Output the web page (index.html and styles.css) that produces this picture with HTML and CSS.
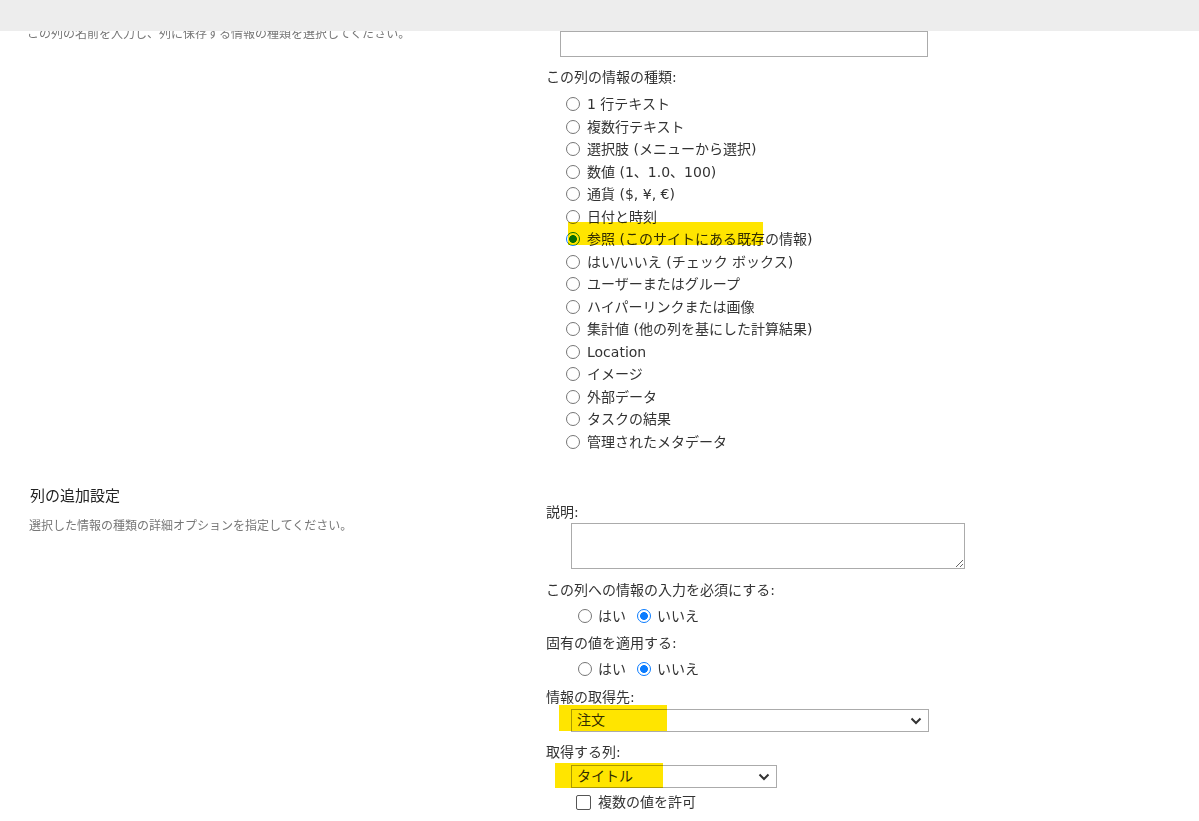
FILE: index.html
```html
<!DOCTYPE html>
<html lang="ja">
<head>
<meta charset="utf-8">
<title>列の作成</title>
<link rel="stylesheet" href="styles.css">
</head>
<body>
<div class="topbar"></div>
<main class="page">
  <section class="sec sec-name">
    <div class="left">
      <p class="desc">この列の名前を入力し、列に保存する情報の種類を選択してください。</p>
    </div>
    <div class="right">
      <input class="text-input" type="text">
      <div class="label lbl-type">この列の情報の種類:</div>
      <ul class="type-list">
        <li><label class="opt"><input type="radio" name="t"><span>1 行テキスト</span></label></li>
        <li><label class="opt"><input type="radio" name="t"><span>複数行テキスト</span></label></li>
        <li><label class="opt"><input type="radio" name="t"><span>選択肢 (メニューから選択)</span></label></li>
        <li><label class="opt"><input type="radio" name="t"><span>数値 (1、1.0、100)</span></label></li>
        <li><label class="opt"><input type="radio" name="t"><span>通貨 ($, ¥, €)</span></label></li>
        <li><label class="opt"><input type="radio" name="t"><span>日付と時刻</span></label></li>
        <li><label class="opt"><input type="radio" name="t" checked><span>参照 (このサイトにある既存の情報)</span></label><span class="hl hl-lookup"></span></li>
        <li><label class="opt"><input type="radio" name="t"><span>はい/いいえ (チェック ボックス)</span></label></li>
        <li><label class="opt"><input type="radio" name="t"><span>ユーザーまたはグループ</span></label></li>
        <li><label class="opt"><input type="radio" name="t"><span>ハイパーリンクまたは画像</span></label></li>
        <li><label class="opt"><input type="radio" name="t"><span>集計値 (他の列を基にした計算結果)</span></label></li>
        <li><label class="opt"><input type="radio" name="t"><span>Location</span></label></li>
        <li><label class="opt"><input type="radio" name="t"><span>イメージ</span></label></li>
        <li><label class="opt"><input type="radio" name="t"><span>外部データ</span></label></li>
        <li><label class="opt"><input type="radio" name="t"><span>タスクの結果</span></label></li>
        <li><label class="opt"><input type="radio" name="t"><span>管理されたメタデータ</span></label></li>
      </ul>
    </div>
  </section>

  <section class="sec sec-extra">
    <div class="left">
      <h3 class="title">列の追加設定</h3>
      <p class="desc">選択した情報の種類の詳細オプションを指定してください。</p>
    </div>
    <div class="right">
      <div class="label">説明:</div>
      <textarea class="textarea"></textarea>
      <div class="label lbl-req">この列への情報の入力を必須にする:</div>
      <div class="radio-row">
        <label class="opt"><input type="radio" name="req"><span>はい</span></label>
        <label class="opt second"><input type="radio" name="req" checked><span>いいえ</span></label>
      </div>
      <div class="label lbl-uniq">固有の値を適用する:</div>
      <div class="radio-row">
        <label class="opt"><input type="radio" name="uniq"><span>はい</span></label>
        <label class="opt second"><input type="radio" name="uniq" checked><span>いいえ</span></label>
      </div>
      <div class="label lbl-src">情報の取得先:</div>
      <div class="fake-select sel-src">
        <span>注文</span>
        <svg class="chev" width="12" height="8" viewBox="0 0 12 8"><polyline points="1.5,1.5 6,6 10.5,1.5" fill="none" stroke="#333" stroke-width="2"/></svg>
        <span class="hl hl-src"></span>
      </div>
      <div class="label lbl-col">取得する列:</div>
      <div class="fake-select sel-col">
        <span>タイトル</span>
        <svg class="chev" width="12" height="8" viewBox="0 0 12 8"><polyline points="1.5,1.5 6,6 10.5,1.5" fill="none" stroke="#333" stroke-width="2"/></svg>
        <span class="hl hl-col"></span>
      </div>
      <label class="opt check-row"><input type="checkbox"><span>複数の値を許可</span></label>
    </div>
  </section>
</main>
</body>
</html>
```

FILE: styles.css
```css
html, body {
  margin: 0;
  padding: 0;
  background: #ffffff;
}

body {
  font-family: "DejaVu Sans", "Noto Sans CJK JP", sans-serif;
  color: #333333;
  font-size: 14px;
}

.topbar {
  position: fixed;
  top: 0;
  left: 0;
  right: 0;
  height: 31px;
  background: #ededed;
  z-index: 10;
}

.page {
  display: block;
}

.sec {
  display: grid;
  grid-template-columns: 546px 1fr;
}

.left {
  padding-left: 27px;
}

.desc {
  margin: 0;
  font-family: "Noto Sans CJK JP", sans-serif;
  font-size: 12px;
  line-height: 18px;
  color: #777777;
}

.sec-name .desc {
  margin-top: 24px;
}

.sec-name .right {
  padding-top: 31px;
}

.text-input {
  display: block;
  box-sizing: border-box;
  margin: 0 0 0 14px;
  width: 368px;
  height: 26px;
  border: 1px solid #ababab;
  background: #fff;
  padding: 0 4px;
  font: inherit;
}

.label {
  font-size: 14px;
  line-height: 22px;
  white-space: nowrap;
}

.lbl-type {
  margin-top: 9px;
}

.type-list {
  list-style: none;
  margin: 5px 0 0;
  padding: 0 0 0 20px;
}

.type-list li {
  position: relative;
  height: 22.5px;
}

.opt {
  display: flex;
  align-items: center;
  height: 100%;
  line-height: 22px;
  white-space: nowrap;
}

.opt input[type="radio"] {
  appearance: none;
  -webkit-appearance: none;
  box-sizing: border-box;
  width: 14px;
  height: 14px;
  margin: 0 7px 0 0;
  flex: none;
  border: 1.5px solid #767676;
  border-radius: 50%;
  background: #fff;
}

.opt input[type="radio"]:checked {
  border: 1.5px solid #0a7cff;
  background: radial-gradient(circle, #0a7cff 0 3.6px, #fff 4.2px);
}

.hl {
  position: absolute;
  background: #ffe500;
  mix-blend-mode: multiply;
  pointer-events: none;
}

.hl-lookup {
  left: 2px;
  top: -6px;
  width: 195px;
  height: 23px;
}

/* section 2 */
.sec-extra .left {
  padding-left: 29px;
  padding-top: 32px;
}

.title {
  margin: 0 0 0 1px;
  font-family: "Noto Sans CJK JP", sans-serif;
  font-weight: normal;
  font-size: 15px;
  line-height: 20px;
  color: #222222;
}

.sec-extra .desc {
  margin-top: 11px;
}

.sec-extra .right {
  padding-top: 48px;
}

.textarea {
  display: block;
  box-sizing: border-box;
  margin: 0 0 0 25px;
  width: 394px;
  height: 46px;
  border: 1px solid #ababab;
  resize: both;
  font: inherit;
}

.lbl-req {
  margin-top: 10px;
}

.radio-row {
  display: flex;
  align-items: center;
  height: 22px;
  margin-top: 4px;
  padding-left: 32px;
}

.radio-row .opt input[type="radio"] {
  margin-right: 6px;
}

.radio-row .second {
  margin-left: 11px;
}

.lbl-uniq {
  margin-top: 5px;
}

.lbl-src {
  margin-top: 6px;
}

.fake-select {
  position: relative;
  box-sizing: border-box;
  display: flex;
  align-items: center;
  justify-content: space-between;
  margin-left: 25px;
  height: 23px;
  border: 1px solid #ababab;
  padding: 0 6px 0 5px;
  font-size: 14px;
  line-height: 21px;
  background: #fff;
}

.sel-src {
  margin-top: 1px;
  width: 358px;
}

.sel-col {
  margin-top: 2px;
  width: 206px;
}

.chev {
  flex: none;
}

.hl-src {
  left: -13px;
  top: -5px;
  width: 108px;
  height: 26px;
}

.hl-col {
  left: -17px;
  top: -3px;
  width: 108px;
  height: 25px;
}

.lbl-col {
  margin-top: 9px;
}

.check-row {
  height: 22px;
  margin-top: 3px;
  padding-left: 30px;
}

.check-row input[type="checkbox"] {
  appearance: none;
  -webkit-appearance: none;
  box-sizing: border-box;
  width: 15px;
  height: 15px;
  margin: 0 7px 0 0;
  border: 1.5px solid #555;
  border-radius: 2px;
  background: #fff;
  flex: none;
}
```
